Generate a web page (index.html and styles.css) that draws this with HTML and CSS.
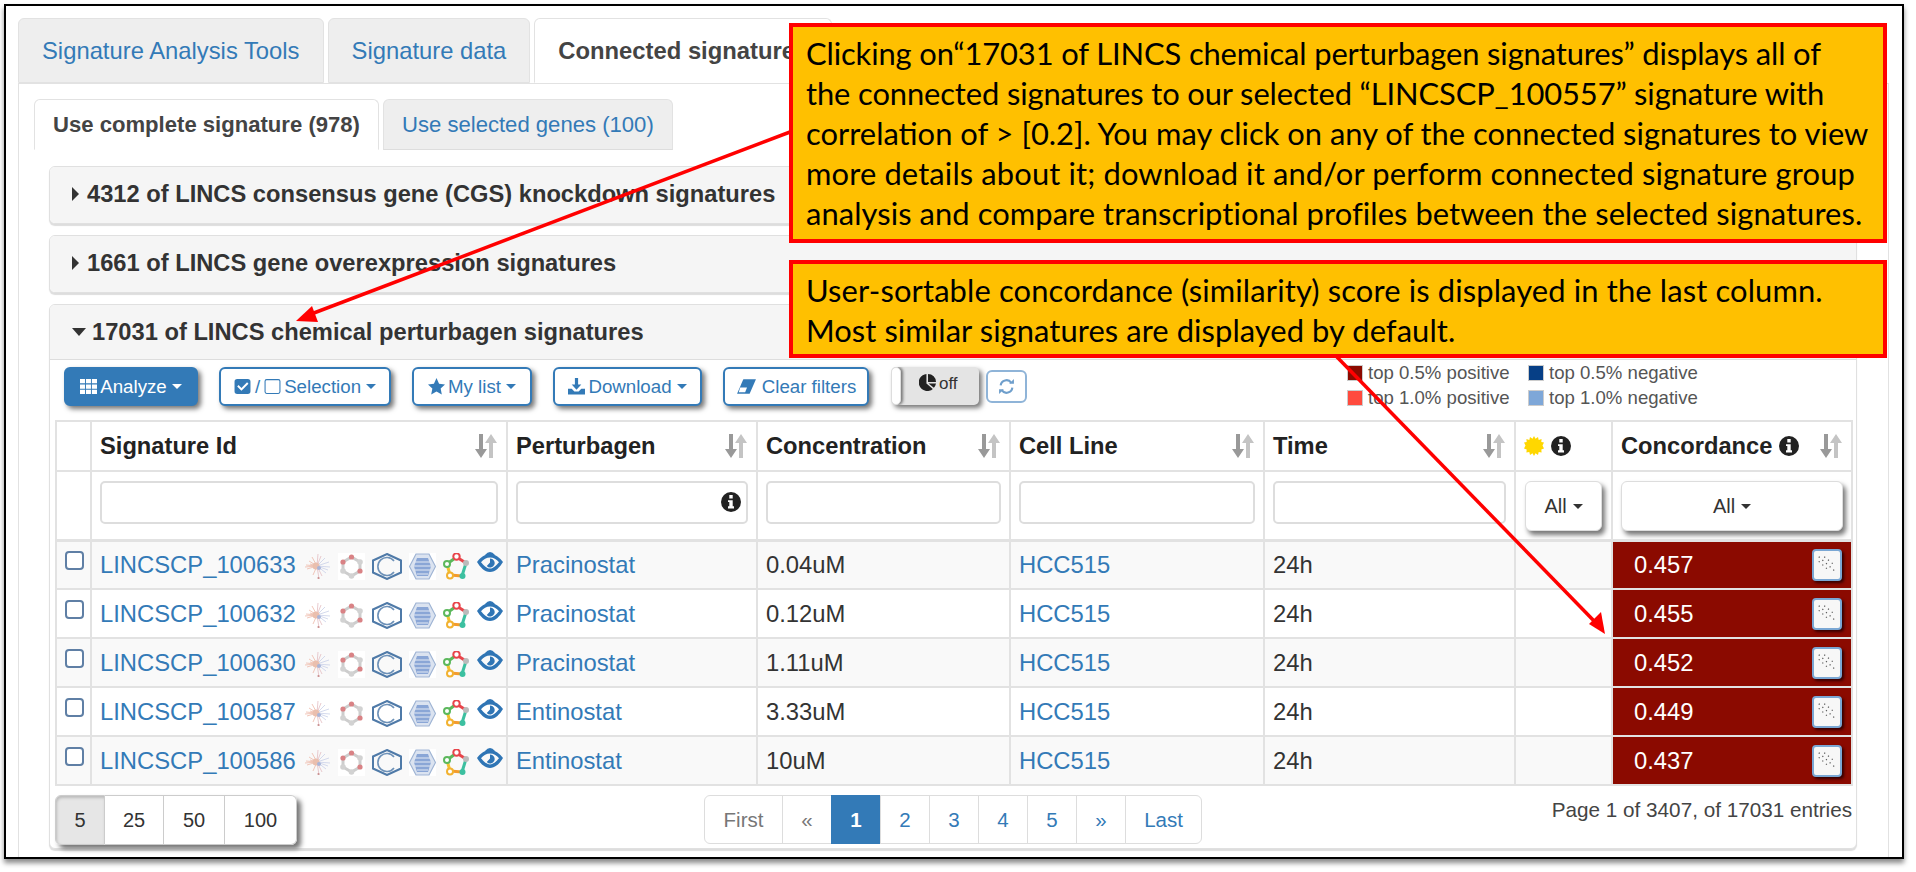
FILE: index.html
```html
<!DOCTYPE html>
<html lang="en">
<head>
<meta charset="utf-8">
<title>Connected signatures</title>
<link rel="stylesheet" href="styles.css">
</head>
<body>
<svg class="defs" aria-hidden="true">
  <symbol id="burst" viewBox="0 0 27 27">
    <g stroke-width=".8" fill="none">
      <path stroke="#eeb9a8" d="M13 13L2 12M13 13L5 8M13 13L3 16M13 13L8 4M13 13L9 22M13 13L1 14M13 13L6 11"/>
      <path stroke="#c9d1e8" d="M13 13L25 9M13 13L26 14M13 13L21 5M13 13L22 20M13 13L24 17"/>
      <path stroke="#e3bcc2" d="M13 13L14 1M13 13L15 26M13 13L18 23M13 13L17 3"/>
    </g>
    <circle cx="12" cy="13" r="3.500" fill="#eabfae"/>
    <circle cx="15" cy="15" r="2" fill="#a9b5d8"/>
    <circle cx="14.500" cy="25" r="1.100" fill="#c98f8f"/>
  </symbol>
  <symbol id="hexdots" viewBox="0 0 27 27">
    <rect width="27" height="27" fill="#fff"/>
    <path d="M13.500 4L22 9V18L13.500 23L5 18V9Z" fill="none" stroke="#cdcdcd" stroke-width="3"/>
    <circle cx="13.500" cy="4" r="2.600" fill="#d98285"/>
    <circle cx="22" cy="9" r="2.800" fill="#d2d2d2"/>
    <circle cx="22" cy="18" r="2.600" fill="#d98285"/>
    <circle cx="13.500" cy="23" r="2.800" fill="#d2d2d2"/>
    <circle cx="5" cy="18" r="2.800" fill="#d2d2d2"/>
    <circle cx="5" cy="9" r="2.600" fill="#d98285"/>
  </symbol>
  <symbol id="benzene" viewBox="0 0 30 27">
    <path d="M15 1L29 7.500V19.500L15 26L1 19.500V7.500Z" fill="none" stroke="#4f7aa8" stroke-width="2"/>
    <path d="M22 8A9 9 0 1 0 22 19" fill="none" stroke="#6d91b8" stroke-width="1.600"/>
  </symbol>
  <symbol id="emblem" viewBox="0 0 27 27">
    <rect width="27" height="27" fill="#fff"/>
    <path d="M7 1H20L26.500 13.500L20 26H7L.5 13.500Z" fill="#dbe3f0" stroke="#9fb4d4" stroke-width="1.200"/>
    <path d="M8 5H19L22 13.500L19 23H8L5 13.500Z" fill="#8aa6d6"/>
    <path d="M5 9H22M5 13H22M6 17H21M8 21H19" stroke="#e4eaf4" stroke-width="1.100"/>
  </symbol>
  <symbol id="pentagon" viewBox="0 0 27 27">
    <path d="M13.500 4L4 11" stroke="#5cb85c" stroke-width="3" fill="none"/>
    <path d="M13.500 4L23 10" stroke="#e8444a" stroke-width="3" fill="none"/>
    <path d="M4 11L7 22" stroke="#f2c230" stroke-width="3" fill="none"/>
    <path d="M7 22L19 23" stroke="#f39c2c" stroke-width="3" fill="none"/>
    <path d="M19 23L23 10" stroke="#3cc0a0" stroke-width="3" fill="none"/>
    <circle cx="13.500" cy="3.500" r="3.200" fill="#fff" stroke="#e8444a" stroke-width="2"/>
    <circle cx="23" cy="10" r="3" fill="#bbb"/>
    <circle cx="4" cy="11" r="3" fill="#fff" stroke="#5cb85c" stroke-width="2"/>
    <circle cx="7" cy="22.500" r="3" fill="#fff" stroke="#f2b230" stroke-width="2"/>
    <circle cx="19.500" cy="23" r="3" fill="#3cc0a0"/>
  </symbol>
  <symbol id="eye" viewBox="0 0 26 22">
    <path fill-rule="evenodd" fill="#2f75b5" d="M13 3C18.500 3 23 7 26 11C23 16 18.500 21 13 21C7.500 21 3 16 0 11C3 7 7.500 3 13 3ZM13 6.500C9.500 6.500 6.500 8.500 4 11.200C6.500 14 9.500 17.500 13 17.500C16.500 17.500 19.500 14 22 11.200C19.500 8.500 16.500 6.500 13 6.500Z"/>
    <path fill="#2f75b5" d="M8 4Q13 -2 18 4ZM13 7.500A4.500 4.500 0 1 1 9.800 15L13 11.500Z"/>
  </symbol>
  <symbol id="sort" viewBox="0 0 24 24">
    <path fill="#999" d="M5 0H9V15H13L7 24L1 15H5Z"/>
    <path fill="#c4c4c4" d="M15 24H19V9H23L17 0L11 9H15Z"/>
  </symbol>
  <symbol id="info" viewBox="0 0 20 20">
    <path fill-rule="evenodd" fill="#222" d="M10 0A10 10 0 1 1 10 20A10 10 0 1 1 10 0ZM8.300 3V6.400H11.700V3ZM7 8.200V10H8.300V14.300H7V16.500H13V14.300H11.700V8.200Z"/>
  </symbol>
  <symbol id="scatter" viewBox="0 0 24 24">
    <path stroke="#555" stroke-width="1.300" stroke-dasharray="1.300 4" fill="none" d="M3 3L21 19M9 3L20 12M3 8L13 17"/>
  </symbol>
</svg>

<main class="frame">
  <nav class="tabs">
    <a class="tab">Signature Analysis Tools</a>
    <a class="tab">Signature data</a>
    <a class="tab tab-active">Connected signatures</a>
  </nav>
  <section class="pane">
    <nav class="subtabs">
      <a class="subtab subtab-active">Use complete signature (978)</a>
      <a class="subtab">Use selected genes (100)</a>
    </nav>
    <div class="subpane">
      <div class="panel panel-closed"><h3 class="panel-head"><i class="caret-right"></i>4312 of LINCS consensus gene (CGS) knockdown signatures</h3></div>
      <div class="panel panel-closed"><h3 class="panel-head"><i class="caret-right"></i>1661 of LINCS gene overexpression signatures</h3></div>
      <div class="panel panel-open">
        <h3 class="panel-head panel-head-open"><i class="caret-down"></i>17031 of LINCS chemical perturbagen signatures</h3>
        <div class="panel-body">
          <div class="toolbar">
            <button class="btn btn-primary"><svg class="ico" viewBox="0 0 16 16"><path fill="#fff" d="M0 1H4.700V5H0ZM5.600 1H10.300V5H5.600ZM11.200 1H16V5H11.200ZM0 6H4.700V10H0ZM5.600 6H10.300V10H5.600ZM11.200 6H16V10H11.200ZM0 11H4.700V15H0ZM5.600 11H10.300V15H5.600ZM11.200 11H16V15H11.200Z"/></svg>Analyze<i class="caret"></i></button>
            <button class="btn btn-select"><svg class="ico" viewBox="0 0 16 16"><path fill-rule="evenodd" fill="#337ab7" d="M3 1H13A2.500 2.500 0 0 1 15.500 3.500V12.500A2.500 2.500 0 0 1 13 15H3A2.500 2.500 0 0 1 .5 12.500V3.500A2.500 2.500 0 0 1 3 1ZM12.300 4L7 9.300L4.300 6.700L3 8L7 12L13.600 5.300Z"/></svg><span class="slash">/</span><svg class="ico" viewBox="0 0 16 16"><rect x="1" y="1.500" width="14" height="13" rx="1.500" fill="none" stroke="#337ab7" stroke-width="1"/></svg>Selection<i class="caret"></i></button>
            <button class="btn btn-list"><svg class="ico" viewBox="0 0 16 16"><path fill="#337ab7" d="M8 0L10.400 5.300L16 6L11.900 9.900L13 15.600L8 12.800L3 15.600L4.100 9.900L0 6L5.600 5.300Z"/></svg>My list<i class="caret"></i></button>
            <button class="btn btn-down"><svg class="ico" viewBox="0 0 16 16"><path fill="#337ab7" d="M6.500 0H9.500V6H12.500L8 11L3.500 6H6.500ZM0 10H3.500L6 12.700H10L12.500 10H16V15.500H0Z"/></svg>Download<i class="caret"></i></button>
            <button class="btn btn-clear"><svg class="ico ico-wide" viewBox="0 0 20 16"><path fill="#337ab7" d="M7 1H19L13 15H1Z"/><path fill="#fff" d="M4 9H10.500L8.700 13.500H2.600Z"/></svg>Clear filters</button>
            <div class="toggle"><span class="toggle-handle"></span><span class="toggle-label"><svg class="ico" viewBox="0 0 16 16"><path fill="#222" d="M7 0V9L13 14A8 8 0 1 1 7 0ZM8.500 0A7.500 7.500 0 0 1 16 7.500H8.500ZM9 9H16A8 8 0 0 1 14 13Z"/></svg>off</span></div>
            <button class="btn-refresh"><svg class="ico" viewBox="0 0 16 16"><path fill="none" stroke="#6f9fcc" stroke-width="2" d="M2.500 7A5.500 5.500 0 0 1 12.500 4.500M13.500 9A5.500 5.500 0 0 1 3.500 11.500"/><path fill="#6f9fcc" d="M10.500 5.500H15V1ZM5.500 10.500H1V15Z"/></svg></button>
            <div class="legend">
              <span class="legend-item"><i class="swatch sw-red-dark"></i>top 0.5% positive</span>
              <span class="legend-item"><i class="swatch sw-blue-dark"></i>top 0.5% negative</span>
              <span class="legend-item"><i class="swatch sw-red"></i>top 1.0% positive</span>
              <span class="legend-item"><i class="swatch sw-blue"></i>top 1.0% negative</span>
            </div>
          </div>
          <table class="grid">
            <colgroup><col class="c0"><col class="c1"><col class="c2"><col class="c3"><col class="c4"><col class="c5"><col class="c6"><col class="c7"></colgroup>
            <thead>
              <tr class="head-row">
                <th></th>
                <th><div class="th-in"><span>Signature Id</span><svg class="sort"><use href="#sort"/></svg></div></th>
                <th><div class="th-in"><span>Perturbagen</span><svg class="sort"><use href="#sort"/></svg></div></th>
                <th><div class="th-in"><span>Concentration</span><svg class="sort"><use href="#sort"/></svg></div></th>
                <th><div class="th-in"><span>Cell Line</span><svg class="sort"><use href="#sort"/></svg></div></th>
                <th><div class="th-in"><span>Time</span><svg class="sort"><use href="#sort"/></svg></div></th>
                <th><div class="th-star"><svg class="sun" viewBox="0 0 20 20"><path fill="#ffd700" d="M10 0L11.500 2.800L14 .9L14.700 3.900L17.600 2.900L17.300 6L20 6.600L18.500 9.500L20 12.400L17.300 13.400L17.600 16.500L14.700 15.900L14 19L11.500 17.200L10 20L8.500 17.200L6 19L5.300 15.900L2.400 16.500L2.700 13.400L0 12.400L1.500 9.500L0 6.600L2.700 6L2.400 2.900L5.300 3.900L6 .9L8.500 2.800Z"/></svg><svg class="info"><use href="#info"/></svg></div></th>
                <th><div class="th-in"><span class="th-conc">Concordance<svg class="info"><use href="#info"/></svg></span><svg class="sort"><use href="#sort"/></svg></div></th>
              </tr>
              <tr class="filter-row">
                <td></td>
                <td><input class="filter" type="text"></td>
                <td><div class="filter-wrap"><input class="filter" type="text"><svg class="info filter-info"><use href="#info"/></svg></div></td>
                <td><input class="filter" type="text"></td>
                <td><input class="filter" type="text"></td>
                <td><input class="filter" type="text"></td>
                <td><button class="all">All<i class="caret"></i></button></td>
                <td><button class="all">All<i class="caret"></i></button></td>
              </tr>
            </thead>
            <tbody>
              <tr>
                <td><span class="check"></span></td>
                <td><div class="sig"><a>LINCSCP_100633</a><svg class="gi"><use href="#burst"/></svg><svg class="gi"><use href="#hexdots"/></svg><svg class="gi gi-w"><use href="#benzene"/></svg><svg class="gi"><use href="#emblem"/></svg><svg class="gi"><use href="#pentagon"/></svg><svg class="gi gi-eye"><use href="#eye"/></svg></div></td>
                <td><a>Pracinostat</a></td><td>0.04uM</td><td><a>HCC515</a></td><td>24h</td><td></td>
                <td class="score"><div class="score-in"><span>0.457</span><button class="plot"><svg><use href="#scatter"/></svg></button></div></td>
              </tr>
              <tr>
                <td><span class="check"></span></td>
                <td><div class="sig"><a>LINCSCP_100632</a><svg class="gi"><use href="#burst"/></svg><svg class="gi"><use href="#hexdots"/></svg><svg class="gi gi-w"><use href="#benzene"/></svg><svg class="gi"><use href="#emblem"/></svg><svg class="gi"><use href="#pentagon"/></svg><svg class="gi gi-eye"><use href="#eye"/></svg></div></td>
                <td><a>Pracinostat</a></td><td>0.12uM</td><td><a>HCC515</a></td><td>24h</td><td></td>
                <td class="score"><div class="score-in"><span>0.455</span><button class="plot"><svg><use href="#scatter"/></svg></button></div></td>
              </tr>
              <tr>
                <td><span class="check"></span></td>
                <td><div class="sig"><a>LINCSCP_100630</a><svg class="gi"><use href="#burst"/></svg><svg class="gi"><use href="#hexdots"/></svg><svg class="gi gi-w"><use href="#benzene"/></svg><svg class="gi"><use href="#emblem"/></svg><svg class="gi"><use href="#pentagon"/></svg><svg class="gi gi-eye"><use href="#eye"/></svg></div></td>
                <td><a>Pracinostat</a></td><td>1.11uM</td><td><a>HCC515</a></td><td>24h</td><td></td>
                <td class="score"><div class="score-in"><span>0.452</span><button class="plot"><svg><use href="#scatter"/></svg></button></div></td>
              </tr>
              <tr>
                <td><span class="check"></span></td>
                <td><div class="sig"><a>LINCSCP_100587</a><svg class="gi"><use href="#burst"/></svg><svg class="gi"><use href="#hexdots"/></svg><svg class="gi gi-w"><use href="#benzene"/></svg><svg class="gi"><use href="#emblem"/></svg><svg class="gi"><use href="#pentagon"/></svg><svg class="gi gi-eye"><use href="#eye"/></svg></div></td>
                <td><a>Entinostat</a></td><td>3.33uM</td><td><a>HCC515</a></td><td>24h</td><td></td>
                <td class="score"><div class="score-in"><span>0.449</span><button class="plot"><svg><use href="#scatter"/></svg></button></div></td>
              </tr>
              <tr>
                <td><span class="check"></span></td>
                <td><div class="sig"><a>LINCSCP_100586</a><svg class="gi"><use href="#burst"/></svg><svg class="gi"><use href="#hexdots"/></svg><svg class="gi gi-w"><use href="#benzene"/></svg><svg class="gi"><use href="#emblem"/></svg><svg class="gi"><use href="#pentagon"/></svg><svg class="gi gi-eye"><use href="#eye"/></svg></div></td>
                <td><a>Entinostat</a></td><td>10uM</td><td><a>HCC515</a></td><td>24h</td><td></td>
                <td class="score"><div class="score-in"><span>0.437</span><button class="plot"><svg><use href="#scatter"/></svg></button></div></td>
              </tr>
            </tbody>
          </table>
          <div class="footer">
            <div class="sizes">
              <button class="size size-on s5">5</button><button class="size s25">25</button><button class="size s50">50</button><button class="size s100">100</button>
            </div>
            <div class="pager">
              <a class="pg pg-first pg-off">First</a><a class="pg pg-off">«</a><a class="pg pg-on">1</a><a class="pg">2</a><a class="pg">3</a><a class="pg">4</a><a class="pg">5</a><a class="pg">»</a><a class="pg pg-last">Last</a>
            </div>
            <div class="count">Page 1 of 3407, of 17031 entries</div>
          </div>
        </div>
      </div>
    </div>
  </section>
</main>

<svg class="arrows" viewBox="0 0 1916 872" aria-hidden="true">
  <path d="M790 132L306 316" stroke="#f00" stroke-width="3.500" fill="none"/>
  <path d="M296 321L312 306L318 322Z" fill="#f00"/>
  <path d="M1336 356L1597 624" stroke="#f00" stroke-width="3.500" fill="none"/>
  <path d="M1605 634L1589 624L1601 612Z" fill="#f00"/>
</svg>
<aside class="callout callout-one"><span class="tight">Clicking on“17031 of LINCS chemical perturbagen signatures” displays all of</span><br><span class="tight">the connected signatures to our selected “LINCSCP_100557” signature with</span><br>correlation of &gt; [0.2]. You may click on any of the connected signatures to view<br><span class="loose">more details about it; download it and/or perform connected signature group</span><br><span class="loose-less">analysis and compare transcriptional profiles between the selected signatures.</span></aside>
<aside class="callout callout-two"><span class="loose">User-sortable concordance (similarity) score is displayed in the last column.</span><br><span class="loose-less">Most similar signatures are displayed by default.</span></aside>
</body>
</html>
```
FILE: styles.css
```css
* { box-sizing: border-box; }
html, body { margin: 0; padding: 0; }
body {
  position: relative;
  width: 1916px;
  height: 872px;
  overflow: hidden;
  background: #fff;
  font-family: "Liberation Sans", Arial, sans-serif;
  font-size: 23.800px;
  color: #333;
}
a { color: #337ab7; text-decoration: none; }
button { font-family: inherit; cursor: pointer; }
.defs { position: absolute; width: 0; height: 0; }

.frame {
  margin: 4px 0 0 4px;
  width: 1900px;
  height: 855px;
  border: 2px solid #000;
  box-shadow: 0 4px 5px #8a8a8a;
  padding: 12px 13px 0 12px;
  display: flex;
  flex-direction: column;
  overflow: hidden;
  background: #fff;
}

.tabs { display: flex; gap: 4px; height: 65px; flex: none; position: relative; }
.tab {
  display: flex;
  align-items: center;
  padding: 0 23px;
  background: #eee;
  border: 1px solid #e2e2e2;
  border-radius: 6px 6px 0 0;
  white-space: nowrap;
}
.tab-active {
  background: #fff;
  color: #444;
  font-weight: bold;
  border-bottom-color: #fff;
}

.pane {
  flex: 1;
  min-height: 0;
  border: 1px solid #e2e2e2;
  border-bottom: 0;
  padding: 15px 15px 0;
}
.subtabs { display: flex; gap: 4px; height: 51px; }
.subtab {
  display: flex;
  align-items: center;
  padding: 0 18px;
  background: #eee;
  border: 1px solid #e2e2e2;
  border-bottom-color: #ddd;
  border-radius: 6px 6px 0 0;
  font-size: 22.100px;
  white-space: nowrap;
}
.subtab-active { background: #fff; font-weight: bold; color: #444; border-bottom-color: #fff; }

.subpane { padding: 16px 16px 0 15px; }
.panel {
  border: 1px solid #e0e0e0;
  border-radius: 6px;
  background: #fff;
  box-shadow: 0 2px 1px #ddd;
  margin-bottom: 11px;
}
.panel-closed .panel-head { height: 56px; padding-bottom: 2px; border-radius: 5px; }
.panel-open { height: 545px; margin: 0; }
.panel-head {
  display: flex;
  align-items: center;
  margin: 0;
  height: 55px;
  padding-left: 22px;
  background: #f5f5f5;
  border-radius: 5px 5px 0 0;
  font-size: 23.700px;
  font-weight: bold;
  color: #333;
  white-space: nowrap;
}
.panel-head-open { border-bottom: 1px solid #ddd; }
.caret-right {
  width: 0; height: 0;
  margin-right: 8px;
  border-left: 7px solid #333;
  border-top: 7px solid transparent;
  border-bottom: 7px solid transparent;
}
.caret-down {
  width: 0; height: 0;
  margin-right: 6px;
  border-top: 8px solid #333;
  border-left: 7.500px solid transparent;
  border-right: 7.500px solid transparent;
}
.panel-body { padding: 0 4px 0 5px; }

.toolbar { display: flex; align-items: flex-start; height: 60px; padding: 7px 0 0 9px; }
.btn {
  display: flex;
  align-items: center;
  justify-content: center;
  height: 39px;
  margin-right: 21px;
  padding: 0;
  background: #fff;
  color: #337ab7;
  border: 2px solid #337ab7;
  border-radius: 6px;
  font-size: 18.700px;
  box-shadow: 3px 3px 5px #777;
  white-space: nowrap;
}
.btn-primary { width: 134px; background: #337ab7; color: #fff; }
.btn-select { width: 172px; }
.btn-list { width: 120px; }
.btn-down { width: 149px; }
.btn-clear { width: 146px; margin-right: 22px; }
.ico { width: 17px; height: 17px; margin-right: 3px; flex: none; }
.ico-wide { width: 21px; margin-right: 5px; }
.slash { margin: 0 4px 0 1px; }
.caret {
  display: inline-block;
  margin-left: 5px;
  border-top: 5.500px solid currentColor;
  border-left: 5.500px solid transparent;
  border-right: 5.500px solid transparent;
}
.toggle {
  display: flex;
  width: 88px;
  height: 38px;
  margin-right: 7px;
  background: #e4e4e4;
  border-radius: 5px;
  box-shadow: 3px 3px 5px #777;
  overflow: hidden;
}
.toggle-handle {
  width: 10px;
  background: #fff;
  border: 1px solid #ddd;
  border-radius: 5px;
  box-shadow: 2px 0 3px #777;
}
.toggle-label {
  display: flex;
  align-items: flex-start;
  padding: 7px 0 0 18px;
  font-size: 17px;
  color: #333;
}
.btn-refresh {
  display: flex;
  align-items: center;
  justify-content: center;
  width: 41px;
  height: 33px;
  margin-top: 3px;
  padding: 0 0 0 3px;
  background: #fff;
  border: 2px solid #8fb4d8;
  border-radius: 6px;
}
.legend {
  display: grid;
  grid-template-columns: 181px auto;
  row-gap: 5px;
  margin: -4px 0 0 320px;
  font-size: 18.600px;
  line-height: 20px;
  color: #555;
}
.legend-item { display: flex; align-items: center; white-space: nowrap; }
.swatch { width: 16px; height: 16px; margin-right: 5px; border: 1px solid #ccc; flex: none; }
.sw-red-dark { background: #8b0a00; }
.sw-blue-dark { background: #063f86; }
.sw-red { background: #ff4b3e; }
.sw-blue { background: #7ea7d8; }

.grid { width: 1796px; table-layout: fixed; border-collapse: collapse; }
.c0 { width: 35px; }
.c1 { width: 416px; }
.c2 { width: 250px; }
.c3 { width: 253px; }
.c4 { width: 254px; }
.c5 { width: 251px; }
.c6 { width: 97px; }
.c7 { width: 240px; }
.grid th, .grid td { border: 2px solid #e2e2e2; padding: 0 8px; white-space: nowrap; }
.grid tbody tr { height: 49px; }
.grid tbody tr:nth-child(odd) td { background: #f9f9f9; }
.grid tbody td { font-size: 23.800px; }
.grid td.score { background: #8b0a00; color: #fff; padding: 0 9px 0 21px; }
.grid tbody tr:nth-child(odd) td.score { background: #8b0a00; }
.head-row { height: 50px; }
.head-row th { text-align: left; color: #222; font-size: 23.700px; }
.th-in { display: flex; align-items: center; justify-content: space-between; }
.th-conc { display: flex; align-items: center; gap: 7px; }
.th-star { display: flex; align-items: center; gap: 7px; }
.sort { width: 24px; height: 24px; flex: none; }
.info { width: 20px; height: 20px; flex: none; }
.sun { width: 20px; height: 20px; flex: none; }
.filter-row { height: 69px; }
.grid .filter-row td { vertical-align: top; padding: 9px 8px 0; border-bottom-width: 3px; }
.filter {
  display: block;
  width: 100%;
  height: 43px;
  border: 2px solid #ddd;
  border-radius: 5px;
  background: #fff;
}
.filter-wrap { position: relative; }
.filter-info { position: absolute; right: 7px; top: 11px; }
.grid .filter-row td:nth-child(7) { padding-left: 9px; padding-right: 9px; }
.all {
  display: flex;
  align-items: center;
  justify-content: center;
  width: 100%;
  height: 50px;
  padding: 0;
  background: #fff;
  border: 1px solid #ddd;
  border-radius: 6px;
  color: #333;
  font-size: 20px;
  box-shadow: 3px 4px 5px #777;
}
.all .caret { margin-left: 6px; }
.check {
  display: block;
  width: 19px;
  height: 19px;
  margin: -9px auto 0;
  border: 2px solid #5f7fa5;
  border-radius: 4px;
  background: #fff;
}
.sig { display: flex; align-items: center; gap: 7px; }
.sig a { margin-right: 1px; }
.gi { width: 27px; height: 27px; margin-top: 3px; flex: none; filter: blur(.35px); }
.gi-w { width: 30px; }
.gi-eye { width: 26px; height: 22px; margin-top: -5px; }
.score-in { display: flex; align-items: center; justify-content: space-between; }
.plot {
  width: 30px;
  height: 32px;
  padding: 2px;
  margin-top: 1px;
  background: #f7f7f7;
  border: 2px solid #7aa7d4;
  border-radius: 4px;
  box-shadow: 2px 2px 3px #300;
}
.plot svg { display: block; width: 100%; height: 100%; }

.footer {
  display: grid;
  grid-template-columns: 649px auto 1fr;
  align-items: start;
  margin-top: 9px;
}
.sizes { display: flex; width: 242px; height: 50px; border-radius: 6px; box-shadow: 4px 4px 5px #777; }
.size {
  padding: 0;
  background: #fff;
  border: 1px solid #ccc;
  border-left-width: 0;
  color: #333;
  font-size: 20px;
}
.s5 { width: 50px; border-left-width: 1px; border-radius: 6px 0 0 6px; }
.s25 { width: 59px; }
.s50 { width: 61px; }
.s100 { width: 72px; border-radius: 0 6px 6px 0; }
.size-on { background: #e6e6e6; box-shadow: inset 1px 2px 3px #bbb; }
.pager { display: flex; height: 49px; }
.pg {
  display: flex;
  align-items: center;
  justify-content: center;
  width: 50px;
  margin-left: -1px;
  background: #fff;
  border: 1px solid #ddd;
  font-size: 20.500px;
}
.pg-first { width: 79px; margin-left: 0; border-radius: 6px 0 0 6px; }
.pg-last { width: 77px; border-radius: 0 6px 6px 0; }
.pg-off { color: #777; }
.pg-on { background: #337ab7; border-color: #337ab7; color: #fff; font-weight: bold; }
.count { justify-self: end; font-size: 20.700px; line-height: 24px; margin-top: 3px; color: #444; white-space: nowrap; }

.arrows { position: absolute; left: 0; top: 0; width: 1916px; height: 872px; pointer-events: none; }
.callout {
  position: absolute;
  left: 789px;
  width: 1098px;
  background: #ffc000;
  border: 4px solid #f00;
  padding: 7px 0 0 13px;
  font-family: Lato, "Open Sans", sans-serif;
  font-size: 30.900px;
  line-height: 40px;
  color: #000;
  white-space: nowrap;
}
.tight { letter-spacing: -.12px; }
.loose { letter-spacing: .13px; }
.loose-less { letter-spacing: .07px; }
.callout-one { top: 23px; height: 220px; }
.callout-two { top: 260px; height: 98px; }
```
